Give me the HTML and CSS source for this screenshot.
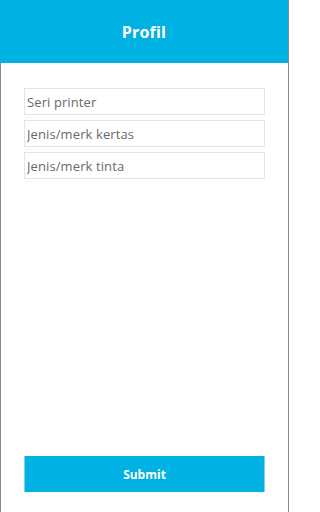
FILE: index.html
```html
<!DOCTYPE html>
<html lang="id">
<head>
<meta charset="utf-8">
<title>Profil</title>
<link rel="stylesheet" href="styles.css">
</head>
<body>
<div class="app">
  <header class="topbar"><h1 class="title">Profil</h1></header>
  <main class="content">
    <form class="form">
      <div class="fields">
        <input class="field" type="text" placeholder="Seri printer">
        <input class="field" type="text" placeholder="Jenis/merk kertas">
        <input class="field" type="text" placeholder="Jenis/merk tinta">
      </div>
      <button class="submit" type="button">Submit</button>
    </form>
  </main>
</div>
</body>
</html>
```
FILE: styles.css
```css
* { box-sizing: border-box; }
html, body { margin: 0; padding: 0; background: #fff; }
body { font-family: "Open Sans", "Liberation Sans", sans-serif; }
.app {
  width: 289px;
  height: 512px;
  display: flex;
  flex-direction: column;
  border-right: 1px solid #8a8a8a;
}
.topbar {
  height: 63px;
  background: #00b2e4;
  display: flex;
  align-items: center;
  justify-content: center;
}
.title {
  margin: 0;
  color: #fff;
  font-size: 16px;
  font-weight: 700;
  letter-spacing: 0.2px;
}
.content {
  flex: 1;
  border-left: 1px solid #8a8a8a;
  padding: 25px 23px 20px 23px;
  display: flex;
}
.form {
  flex: 1;
  display: flex;
  flex-direction: column;
  justify-content: space-between;
}
.fields {
  display: flex;
  flex-direction: column;
  gap: 5px;
}
.field {
  height: 27px;
  width: 100%;
  margin: 0;
  border: 1px solid #e4e4e4;
  padding: 0 2px;
  font-family: "Open Sans", "Liberation Sans", sans-serif;
  font-size: 13px;
  letter-spacing: 0.1px;
  color: #555;
  outline: none;
  background: #fff;
}
.field::placeholder { color: #6a6a6a; }
.submit {
  height: 36px;
  width: 100%;
  margin: 0;
  background: #00b2e4;
  border: none;
  border-left: 1px solid #7fd2ef;
  border-right: 1px solid #7fd2ef;
  color: #fff;
  font-family: "Open Sans", "Liberation Sans", sans-serif;
  font-weight: 700;
  font-size: 12px;
  padding: 0;
}
```
